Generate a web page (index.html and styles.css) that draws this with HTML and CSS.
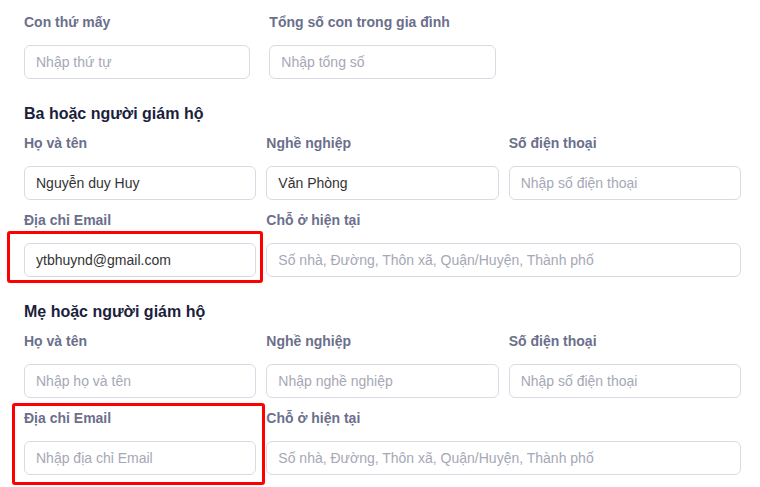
FILE: index.html
```html
<!DOCTYPE html>
<html lang="vi">
<head>
<meta charset="utf-8">
<title>Thông tin gia đình</title>
<link rel="stylesheet" href="styles.css">
</head>
<body>
<div class="page">
  <div class="grid grid-wide">
    <div class="field">
      <label class="label">Con thứ mấy</label>
      <input class="input" placeholder="Nhập thứ tự">
    </div>
    <div class="field">
      <label class="label">Tổng số con trong gia đình</label>
      <input class="input" placeholder="Nhập tổng số">
    </div>
  </div>

  <h3 class="heading">Ba hoặc người giám hộ</h3>
  <div class="grid">
    <div class="field">
      <label class="label">Họ và tên</label>
      <input class="input" value="Nguyễn duy Huy">
    </div>
    <div class="field">
      <label class="label">Nghề nghiệp</label>
      <input class="input" value="Văn Phòng">
    </div>
    <div class="field">
      <label class="label">Số điện thoại</label>
      <input class="input" placeholder="Nhập số điện thoại">
    </div>
    <div class="field">
      <label class="label">Địa chỉ Email</label>
      <input class="input" value="ytbhuynd@gmail.com">
      <span class="mark mark-one"></span>
    </div>
    <div class="field span-2">
      <label class="label">Chỗ ở hiện tại</label>
      <input class="input" placeholder="Số nhà, Đường, Thôn xã, Quận/Huyện, Thành phố">
    </div>
  </div>

  <h3 class="heading">Mẹ hoặc người giám hộ</h3>
  <div class="grid">
    <div class="field">
      <label class="label">Họ và tên</label>
      <input class="input" placeholder="Nhập họ và tên">
    </div>
    <div class="field">
      <label class="label">Nghề nghiệp</label>
      <input class="input" placeholder="Nhập nghề nghiệp">
    </div>
    <div class="field">
      <label class="label">Số điện thoại</label>
      <input class="input" placeholder="Nhập số điện thoại">
    </div>
    <div class="field">
      <label class="label">Địa chỉ Email</label>
      <input class="input" placeholder="Nhập địa chỉ Email">
      <span class="mark mark-two"></span>
    </div>
    <div class="field span-2">
      <label class="label">Chỗ ở hiện tại</label>
      <input class="input" placeholder="Số nhà, Đường, Thôn xã, Quận/Huyện, Thành phố">
    </div>
  </div>
</div>
</body>
</html>
```

FILE: styles.css
```css
* { box-sizing: border-box; }
html, body { margin: 0; background: #fff; }
body {
  font-family: "Liberation Sans", Arial, sans-serif;
}
.page {
  width: 760px;
  height: 487px;
  overflow: hidden;
  padding: 12px 19px 0 24px;
}
.grid {
  display: grid;
  grid-template-columns: repeat(3, 1fr);
  column-gap: 10px;
  row-gap: 10px;
}
.grid-wide { column-gap: 19px; }
.field {
  position: relative;
  display: flex;
  flex-direction: column;
}
.span-2 { grid-column: span 2; }
.label {
  display: block;
  font-size: 14px;
  line-height: 20px;
  font-weight: 700;
  color: #6b6f8c;
  margin-bottom: 13px;
}
.input {
  height: 34px;
  width: 100%;
  border: 1px solid #dadae4;
  border-radius: 6px;
  padding: 0 11px;
  font-family: "Liberation Sans", Arial, sans-serif;
  font-size: 14px;
  color: #333333;
  background: #fff;
  outline: none;
}
.input::placeholder {
  color: #a6a8b6;
}
.heading {
  margin: 24px 0 8px;
  font-size: 16px;
  line-height: 22px;
  font-weight: 700;
  color: #1b1e3c;
}
.mark {
  position: absolute;
  border: 3px solid #ff0000;
  border-radius: 3px;
  pointer-events: none;
}
.mark-one {
  left: -17px;
  top: 21px;
  width: 256px;
  height: 52px;
}
.mark-two {
  left: -12px;
  top: -5px;
  width: 253px;
  height: 82px;
}
```
